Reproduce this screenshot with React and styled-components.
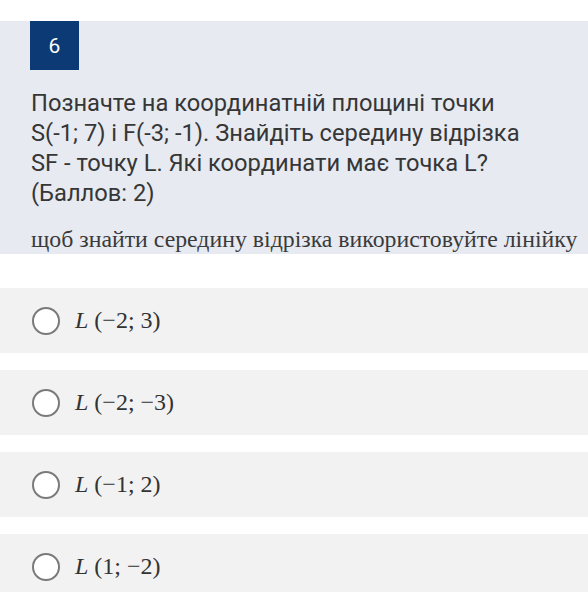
import React from "react";
import styled, { createGlobalStyle } from "styled-components";

const GlobalStyle = createGlobalStyle`
  html, body {
    margin: 0;
    padding: 0;
    background: #ffffff;
  }
`;

const Page = styled.main`
  width: 588px;
  padding-top: 21px;
`;

const QuestionPanel = styled.section`
  background-color: #e7eaf1;
  padding: 0 0 0 30px;
  height: 233px;
  box-sizing: border-box;
  overflow: hidden;
`;

const Badge = styled.div`
  width: 49px;
  height: 49px;
  background-color: #0b3a75;
  color: #ffffff;
  font-family: Roboto, "Liberation Sans", sans-serif;
  font-size: 21px;
  display: flex;
  align-items: center;
  justify-content: center;
`;

const QuestionText = styled.p`
  margin: 18px 0 0 1px;
  font-family: Roboto, "Noto Sans", sans-serif;
  font-size: 23.7px;
  line-height: 30px;
  color: #363636;
`;

const Hint = styled.p`
  margin: 17px 0 0 1px;
  font-family: "Liberation Serif", "DejaVu Serif", serif;
  font-size: 23.8px;
  line-height: 28px;
  color: #3a3a3a;
  white-space: nowrap;
`;

const Options = styled.ul`
  list-style: none;
  margin: 34px 0 0;
  padding: 0;
  display: flex;
  flex-direction: column;
  gap: 17px;
`;

const Option = styled.li`
  height: 65px;
  background-color: #f2f2f2;
  display: flex;
  align-items: center;
  gap: 15px;
  padding-left: 32px;
`;

const Radio = styled.span`
  width: 24px;
  height: 24px;
  border-radius: 50%;
  border: 2px solid #7a7a7a;
  background: #ffffff;
  flex: none;
`;

const Answer = styled.span`
  font-family: "Liberation Serif", "DejaVu Serif", serif;
  font-size: 24px;
  color: #333333;
  white-space: pre;
`;

const answers = ["(\u22122; 3)", "(\u22122; \u22123)", "(\u22121; 2)", "(1; \u22122)"];

export default function App() {
  return (
    <Page>
      <GlobalStyle />
      <QuestionPanel>
        <Badge>6</Badge>
        <QuestionText>
          Позначте на координатній площині точки
          <br />
          S(-1; 7) і F(-3; -1). Знайдіть середину відрізка
          <br />
          SF - точку L. Які координати має точка L?
          <br />
          (Баллов: 2)
        </QuestionText>
        <Hint>щоб знайти середину відрізка використовуйте лінійку</Hint>
      </QuestionPanel>
      <Options>
        {answers.map((a) => (
          <Option key={a}>
            <Radio />
            <Answer>
              <i>L</i> {a}
            </Answer>
          </Option>
        ))}
      </Options>
    </Page>
  );
}
